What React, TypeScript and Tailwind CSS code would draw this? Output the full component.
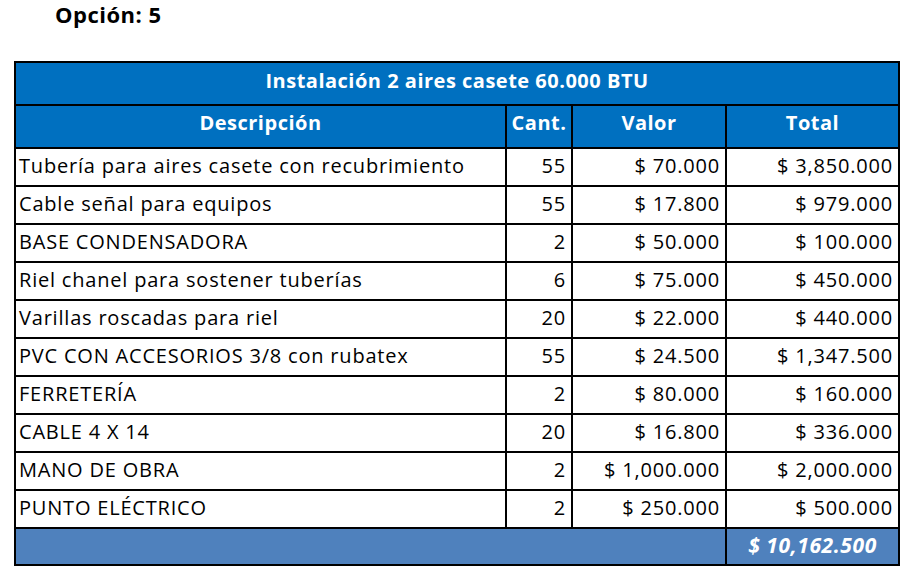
import React from "react";

const rows: [string, string, string, string][] = [
  ["Tubería para aires casete con recubrimiento", "55", "$ 70.000", "$ 3,850.000"],
  ["Cable señal para equipos", "55", "$ 17.800", "$ 979.000"],
  ["BASE CONDENSADORA", "2", "$ 50.000", "$ 100.000"],
  ["Riel chanel para sostener tuberías", "6", "$ 75.000", "$ 450.000"],
  ["Varillas roscadas para riel", "20", "$ 22.000", "$ 440.000"],
  ["PVC CON ACCESORIOS 3/8 con rubatex", "55", "$ 24.500", "$ 1,347.500"],
  ["FERRETERÍA", "2", "$ 80.000", "$ 160.000"],
  ["CABLE 4 X 14", "20", "$ 16.800", "$ 336.000"],
  ["MANO DE OBRA", "2", "$ 1,000.000", "$ 2,000.000"],
  ["PUNTO ELÉCTRICO", "2", "$ 250.000", "$ 500.000"],
];

export default function App() {
  return (
    <div
      className="w-[915px] h-[577px] bg-white text-black"
      style={{ fontFamily: "'Open Sans', Lato, sans-serif" }}
    >
      <div className="pl-[55px] pt-[0px] h-[61px] text-[22px] font-bold leading-[28px] tracking-[0.5px]">Opción: 5</div>
      <table className="ml-[14px] w-[884px] table-fixed border-collapse border-2 border-black text-[20px]">
        <colgroup>
          <col className="w-[491px]" />
          <col className="w-[66px]" />
          <col className="w-[154px]" />
          <col className="w-[173px]" />
        </colgroup>
        <tbody>
          <tr className="h-[43px] bg-[#0070c0] text-white font-bold tracking-[0.5px]">
            <td colSpan={4} className="border-2 border-black text-center pb-[6px]">
              Instalación 2 aires casete 60.000 BTU
            </td>
          </tr>
          <tr className="h-[43px] bg-[#0070c0] text-white font-bold tracking-[0.5px]">
            <td className="border-2 border-black text-center pb-[8px]">Descripción</td>
            <td className="border-2 border-black text-center pb-[8px]">Cant.</td>
            <td className="border-2 border-black text-center pb-[8px]">Valor</td>
            <td className="border-2 border-black text-center pb-[8px]">Total</td>
          </tr>
          {rows.map((r, i) => (
            <tr key={i} className="h-[38px] tracking-[0.8px]">
              <td className="border-2 border-black pl-[3px] pb-[2px] whitespace-nowrap">{r[0]}</td>
              <td className="border-2 border-black pr-[5px] pb-[2px] text-right">{r[1]}</td>
              <td className="border-2 border-black pr-[5px] pb-[2px] text-right">{r[2]}</td>
              <td className="border-2 border-black pr-[5px] pb-[2px] text-right">{r[3]}</td>
            </tr>
          ))}
          <tr className="h-[37px] bg-[#4f81bd] text-white">
            <td colSpan={3} className="border-y-2 border-black"></td>
            <td className="border-2 border-black text-center font-bold italic text-[21px] tracking-[0.6px] pb-[2px]">$ 10,162.500</td>
          </tr>
        </tbody>
      </table>
    </div>
  );
}
